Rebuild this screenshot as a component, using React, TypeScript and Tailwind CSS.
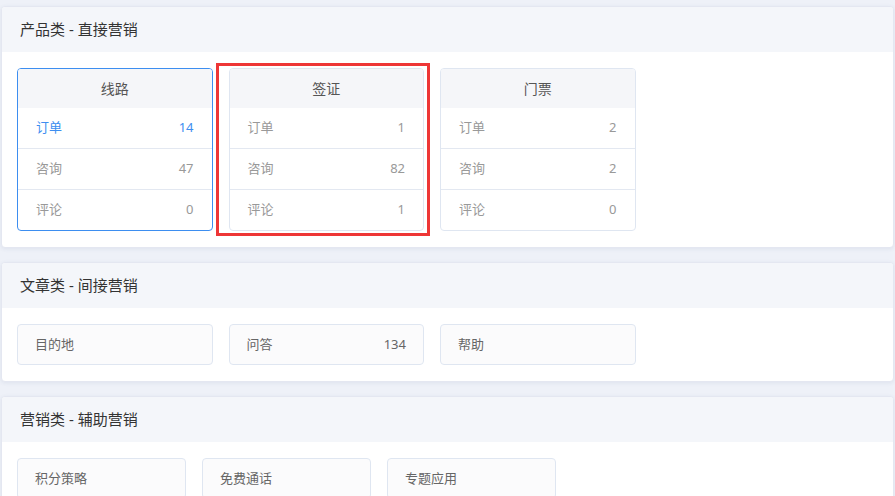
import React from 'react';

interface Stat {
  label: string;
  value: number;
}

interface ProductCard {
  title: string;
  stats: Stat[];
  active?: boolean;
  marked?: boolean;
}

const products: ProductCard[] = [
  {
    title: '线路',
    active: true,
    stats: [
      { label: '订单', value: 14 },
      { label: '咨询', value: 47 },
      { label: '评论', value: 0 },
    ],
  },
  {
    title: '签证',
    marked: true,
    stats: [
      { label: '订单', value: 1 },
      { label: '咨询', value: 82 },
      { label: '评论', value: 1 },
    ],
  },
  {
    title: '门票',
    stats: [
      { label: '订单', value: 2 },
      { label: '咨询', value: 2 },
      { label: '评论', value: 0 },
    ],
  },
];

const articles: { label: string; value?: number }[] = [
  { label: '目的地' },
  { label: '问答', value: 134 },
  { label: '帮助' },
];

const tools = ['积分策略', '免费通话', '专题应用'];

function Panel({ title, children }: { title: string; children: React.ReactNode }) {
  return (
    <div className="bg-white rounded border border-[#e4e7f1] shadow-[0_1px_4px_rgba(40,60,120,0.08)] overflow-hidden">
      <div className="h-[45px] bg-[#f4f6fa] flex items-center px-[18px] text-[15px] text-[#333]">{title}</div>
      <div className="px-[15px] py-4">{children}</div>
    </div>
  );
}

function StatCard({ card }: { card: ProductCard }) {
  return (
    <div className="relative w-[195.5px]">
      <div
        className={
          card.active
            ? 'rounded border border-[#3d8ef0] overflow-hidden'
            : 'rounded border border-[#dfe6f1] overflow-hidden'
        }
      >
        <div className="h-[39px] bg-[#f5f6f9] flex items-center justify-center text-[14px] text-[#555]">
          {card.title}
        </div>
        {card.stats.map((s, i) => (
          <div
            key={s.label}
            className={
              (i > 0 ? 'h-[41px] border-t border-[#e3e8f1] ' : 'h-[40px] ') +
              'flex items-center justify-between px-[18px] text-[13px] ' +
              (card.active && i === 0 ? 'text-[#3d8ef0]' : 'text-[#999]')
            }
          >
            <span>{s.label}</span>
            <span>{s.value}</span>
          </div>
        ))}
      </div>
      {card.marked && (
        <div className="absolute left-[-13px] top-[-5px] right-[-6px] bottom-[-5px] border-[3px] border-[#ee3636] pointer-events-none" />
      )}
    </div>
  );
}

export default function App() {
  return (
    <div
      className="min-h-screen bg-[#eef1f8] pt-[6px] px-[1px] flex flex-col gap-[14px]"
      style={{ fontFamily: '"Noto Sans", "Noto Sans CJK SC", sans-serif' }}
    >
      <Panel title="产品类 - 直接营销">
        <div className="flex gap-4">
          {products.map((c) => (
            <StatCard key={c.title} card={c} />
          ))}
        </div>
      </Panel>

      <Panel title="文章类 - 间接营销">
        <div className="flex gap-4">
          {articles.map((a) => (
            <div
              key={a.label}
              className="w-[195.5px] h-[41px] rounded border border-[#dfe6f1] bg-[#fbfbfc] flex items-center justify-between px-[17px] text-[13px] text-[#666]"
            >
              <span>{a.label}</span>
              {a.value !== undefined && <span>{a.value}</span>}
            </div>
          ))}
        </div>
      </Panel>

      <Panel title="营销类 - 辅助营销">
        <div className="flex gap-4">
          {tools.map((t) => (
            <div
              key={t}
              className="w-[169px] h-[41px] rounded border border-[#dfe6f1] bg-[#fbfbfc] flex items-center px-[17px] text-[13px] text-[#666]"
            >
              {t}
            </div>
          ))}
        </div>
      </Panel>
    </div>
  );
}
